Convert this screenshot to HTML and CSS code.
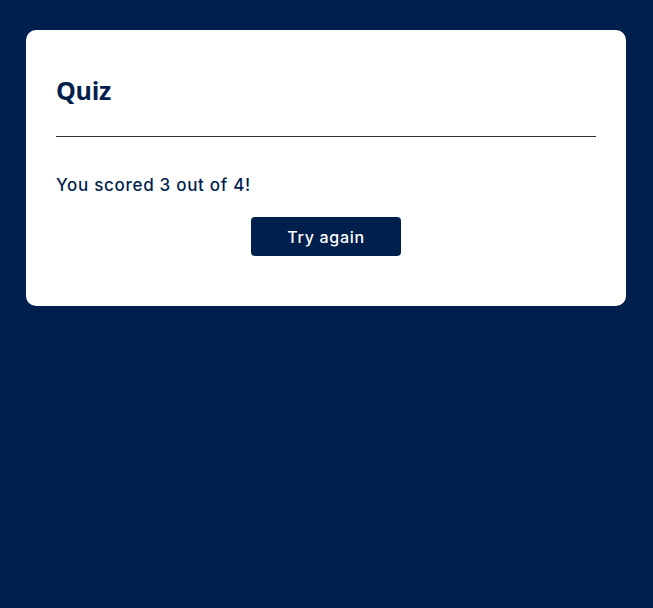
FILE: index.html
```html
<!DOCTYPE html>
<html>
<head>
<meta charset="utf-8">
<link rel="stylesheet" href="styles.css">
</head>
<body>
<div class="card">
  <h1 class="title">Quiz</h1>
  <hr class="divider">
  <p class="result">You scored 3 out of 4!</p>
  <div class="actions">
    <button class="btn">Try again</button>
  </div>
</div>
</body>
</html>
```
FILE: styles.css
```css
html, body {
  margin: 0;
  padding: 0;
  background: #001f4d;
  height: 100%;
}
body {
  font-family: "Open Sans", "Noto Sans", sans-serif;
  color: #001f4d;
  padding: 30px 0 0 26px;
  box-sizing: border-box;
}
.card {
  width: 600px;
  background: #fff;
  border-radius: 10px;
  padding: 30px 30px 50px;
  box-sizing: border-box;
}
.title {
  margin: 0;
  padding-top: 12px;
  font-size: 25px;
  line-height: 36px;
  font-weight: 700;
  letter-spacing: -0.3px;
}
.divider {
  margin: 28px 0 0;
  border: 0;
  border-top: 1px solid #333;
}
.result {
  margin: 35px 0 0;
  font-family: Inter, "Open Sans", sans-serif;
  font-size: 17px;
  line-height: 26px;
  font-weight: 500;
  letter-spacing: 0.7px;
}
.actions {
  display: flex;
  justify-content: center;
  margin-top: 19px;
}
.btn {
  width: 150px;
  height: 39px;
  background: #001f4d;
  color: #fff;
  border: 0;
  border-radius: 4px;
  font-family: Inter, "Open Sans", sans-serif;
  font-size: 16px;
  font-weight: 500;
  letter-spacing: 0.7px;
}
```
